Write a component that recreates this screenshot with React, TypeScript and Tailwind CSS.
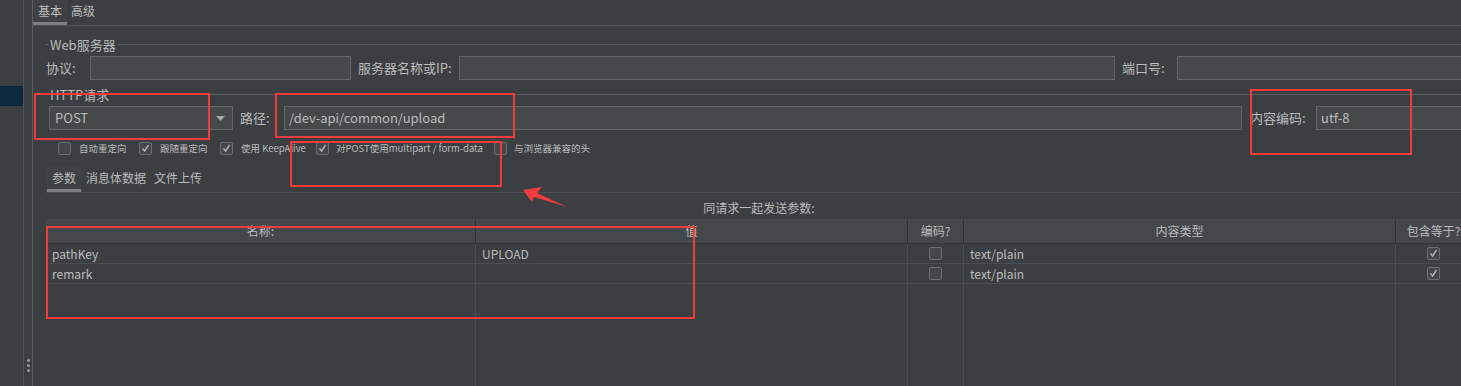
import React from 'react';

const font = "font-['Noto_Sans_CJK_SC',sans-serif]";

const Box: React.FC<{ checked?: boolean }> = ({ checked }) => (
  <div className="w-[13px] h-[13px] rounded-[2px] border border-[#6b6e70] bg-[#43474a] flex items-center justify-center shrink-0">
    {checked && (
      <svg width="11" height="11" viewBox="0 0 11 11">
        <path d="M2.5 5.5 L4.6 8 L8.5 2" fill="none" stroke="#b4b4b4" strokeWidth="1.4" />
      </svg>
    )}
  </div>
);

const Legend: React.FC<{ title: string }> = ({ title }) => (
  <div className="flex items-center h-[15px] pl-[12px]">
    <div className="w-[3px] h-px bg-[#5b5e60]" />
    <span className="px-[2px] text-[13px] leading-[15px] text-[#bbbbbb]">{title}</span>
    <div className="flex-1 h-px bg-[#5b5e60]" />
  </div>
);

const input = 'h-[24px] bg-[#45494a] border border-[#626466] flex items-center px-[4px] text-[13px] text-[#bbbbbb] shrink-0';

const head = 'h-[25px] bg-[#45484a] border-r border-b border-[#313335] flex items-center justify-center text-[12px] text-[#bbbbbb] whitespace-nowrap overflow-hidden';
const cell = 'h-[20px] border-r border-b border-[#4b4e50] flex items-center text-[12px] text-[#bbbbbb] px-[6px]';

const params = [
  { name: 'pathKey', value: 'UPLOAD' },
  { name: 'remark', value: '' },
];

const App: React.FC = () => {
  return (
    <div className={`${font} relative w-[1461px] h-[386px] overflow-hidden bg-[#3c3f41] flex`}>
      {/* left tree strip */}
      <div className="w-[24px] shrink-0 border-r border-[#515456] flex flex-col">
        <div className="h-[86px]" />
        <div className="h-[20px] bg-[#0d293e]" />
      </div>
      <div className="w-[9px] shrink-0 border-r border-[#5d5f61] flex flex-col items-center justify-end pb-[14px] gap-[2px]">
        <div className="w-[3px] h-[3px] rounded-full bg-[#9a9c9e]" />
        <div className="w-[3px] h-[3px] rounded-full bg-[#9a9c9e]" />
        <div className="w-[3px] h-[3px] rounded-full bg-[#9a9c9e]" />
      </div>

      {/* main panel */}
      <div className="flex-1 flex flex-col min-w-0">
        <div className="h-[26px] border-b border-[#4e5254] flex items-end text-[12px] text-[#bbbbbb]">
          <div className="h-[25px] px-[5px] flex items-center bg-[#3f4244] border-b-[3px] border-[#7c8084]">基本</div>
          <div className="h-[25px] px-[4px] flex items-center pb-[3px]">高级</div>
        </div>

        <div className="mt-[11px]">
          <Legend title="Web服务器" />
        </div>
        <div className="mt-[4px] flex items-center pl-[13px] h-[24px] text-[13px] text-[#bbbbbb] whitespace-nowrap">
          <span className="w-[44px] shrink-0">协议:</span>
          <div className={`${input} w-[261px]`} />
          <span className="ml-[7px] w-[101px] shrink-0">服务器名称或IP:</span>
          <div className={`${input} w-[656px]`} />
          <span className="ml-[7px] w-[55px] shrink-0">端口号:</span>
          <div className={`${input} w-[320px]`} />
        </div>

        <div className="mt-[7px]">
          <Legend title="HTTP请求" />
        </div>
        <div className="mt-[4px] flex items-center pl-[16px] h-[24px] text-[13px] text-[#bbbbbb] whitespace-nowrap">
          <div className={`${input} w-[184px] justify-between pl-[5px] pr-[7px]`}>
            <span>POST</span>
            <svg width="9" height="5" viewBox="0 0 9 5">
              <path d="M0 0 H9 L4.5 5 Z" fill="#a8a8a8" />
            </svg>
          </div>
          <span className="ml-[7px] w-[44px] shrink-0">路径:</span>
          <div className={`${input} w-[958px]`}>/dev-api/common/upload</div>
          <span className="ml-[8px] w-[66px] shrink-0">内容编码:</span>
          <div className={`${input} w-[200px]`}>utf-8</div>
        </div>

        <div className="mt-[11px] h-[14px] flex items-center pl-[25px] text-[9.5px] text-[#bbbbbb] whitespace-nowrap">
          <div className="w-[81px] flex items-center gap-[8px]"><Box /><span>自动重定向</span></div>
          <div className="w-[81px] flex items-center gap-[8px]"><Box checked /><span>跟随重定向</span></div>
          <div className="w-[96px] flex items-center gap-[8px]"><Box checked /><span>使用 KeepAlive</span></div>
          <div className="w-[178px] flex items-center gap-[7px]"><Box checked /><span>对POST使用multipart / form-data</span></div>
          <div className="flex items-center gap-[7px]"><Box /><span>与浏览器兼容的头</span></div>
        </div>

        <div className="mt-[11px] ml-[14px] h-[27px] border-b border-[#4e5254] flex items-end text-[12px] text-[#bbbbbb] whitespace-nowrap">
          <div className="h-[26px] px-[5px] flex items-center bg-[#3f4244] border-b-[3px] border-[#7c8084]">参数</div>
          <div className="h-[26px] px-[5px] flex items-center pb-[3px]">消息体数据</div>
          <div className="h-[26px] px-[3px] flex items-center pb-[3px]">文件上传</div>
        </div>

        {/* parameters table */}
        <div className="ml-[13px] w-[1426px] flex-1 flex flex-col">
          <div className="h-[26px] flex items-center justify-center text-[12px] text-[#bbbbbb] pt-[4px]">同请求一起发送参数:</div>
          <div className="grid grid-cols-[430px_432px_56px_432px_76px]">
            <div className={head}>名称:</div>
            <div className={head}>值</div>
            <div className={head}>编码?</div>
            <div className={head}>内容类型</div>
            <div className={head}>包含等于?</div>
          </div>
          {params.map((p) => (
            <div key={p.name} className="grid grid-cols-[430px_432px_56px_432px_76px]">
              <div className={cell}>{p.name}</div>
              <div className={cell}>{p.value}</div>
              <div className={`${cell} justify-center`}><Box /></div>
              <div className={`${cell} px-[5px]`}>text/plain</div>
              <div className={`${cell} justify-center`}><Box checked /></div>
            </div>
          ))}
          <div className="flex-1 grid grid-cols-[430px_432px_56px_432px_76px]">
            <div className="border-r border-[#4b4e50]" />
            <div className="border-r border-[#4b4e50]" />
            <div className="border-r border-[#4b4e50]" />
            <div className="border-r border-[#4b4e50]" />
            <div />
          </div>
        </div>
      </div>

      {/* red annotations */}
      <div className="absolute left-[34px] top-[93px] w-[176px] h-[47px] border-2 border-[#f23b3b]" />
      <div className="absolute left-[275px] top-[93px] w-[240px] h-[45px] border-2 border-[#f23b3b]" />
      <div className="absolute left-[1250px] top-[89px] w-[162px] h-[66px] border-2 border-[#f23b3b]" />
      <div className="absolute left-[290px] top-[141px] w-[212px] h-[46px] border-2 border-[#f23b3b]" />
      <div className="absolute left-[46px] top-[226px] w-[649px] h-[93px] border-2 border-[#f23b3b]" />
      <svg className="absolute left-0 top-0" width="1461" height="386">
        <polygon points="523,190 542,187 537,193 567,207 534,197 532,202" fill="#f23b3b" />
      </svg>
    </div>
  );
};

export default App;
